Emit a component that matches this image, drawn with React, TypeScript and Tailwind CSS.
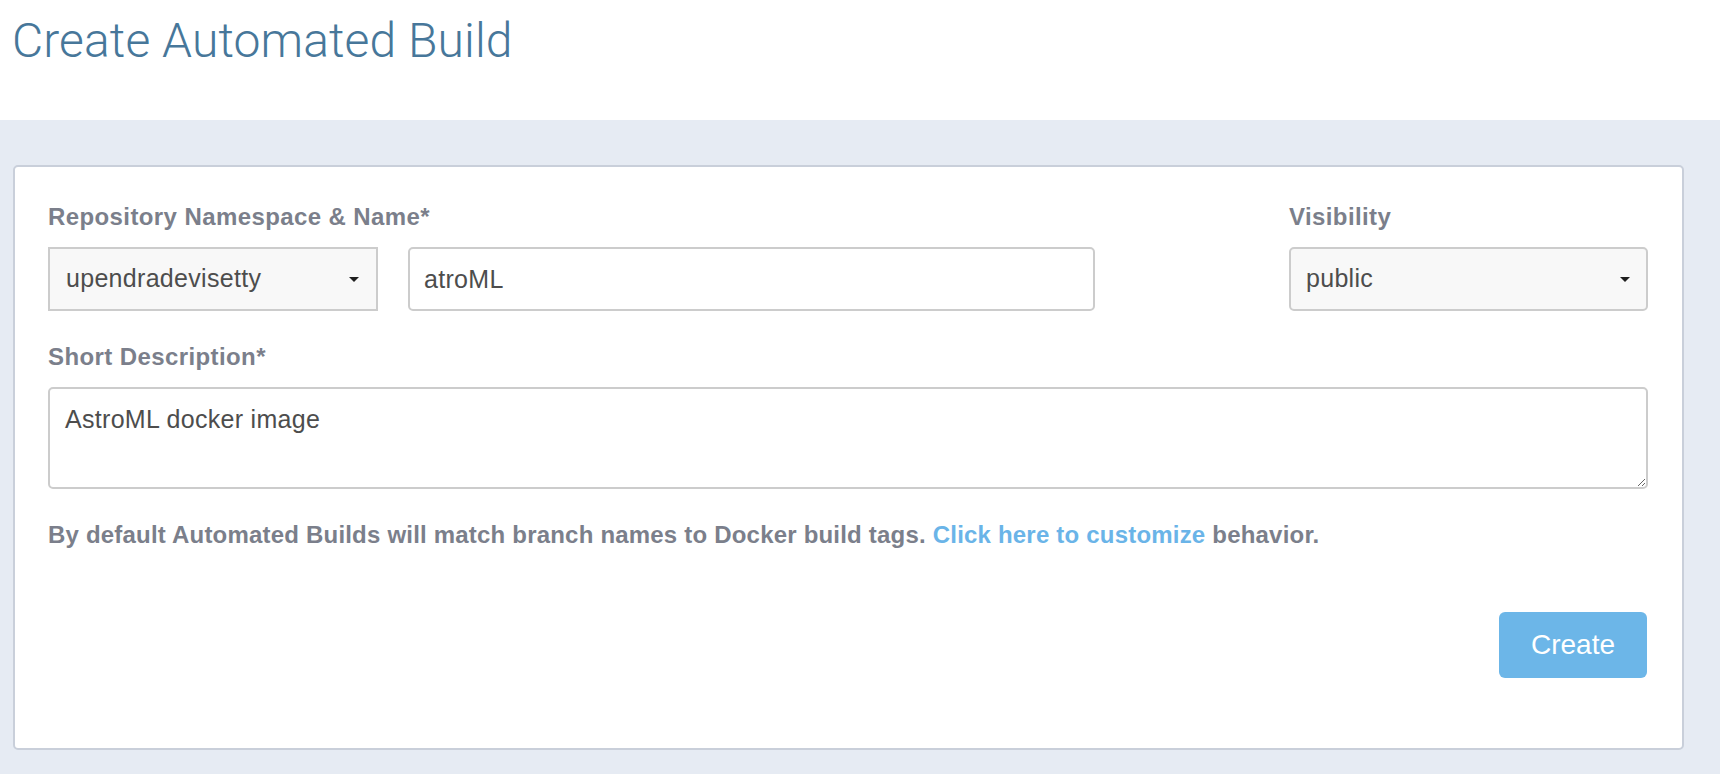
import React from 'react';

const sans = "font-['Liberation_Sans',Arial,sans-serif]";

function Caret() {
  return (
    <svg width="10" height="5" viewBox="0 0 10 5" className="shrink-0">
      <path d="M0 0 L10 0 L5 5 Z" fill="#1f1f1f" />
    </svg>
  );
}

export default function App() {
  return (
    <div className={`${sans} bg-[#e6ebf3] min-h-screen`}>
      {/* Page header */}
      <div className="bg-white h-[120px] pl-[12px] pt-[17px]">
        <h1 className="font-['Roboto',sans-serif] font-light text-[48px] leading-[48px] tracking-[0.1px] text-[#47779a]">
          Create Automated Build
        </h1>
      </div>

      {/* Form card */}
      <div className="pl-[13px] pr-[36px] pt-[45px] pb-[24px]">
        <div className="bg-white border-2 border-[#c9cfda] rounded-[5px] pt-[38px] pl-[33px] pr-[34px] pb-[70px]">
          <div className="flex justify-between">
            <div>
              <div className="text-[24px] leading-6 font-bold tracking-[0.4px] text-[#7b7f8b]">Repository Namespace &amp; Name*</div>
              <div className="flex gap-[30px] mt-[18px]">
                <div className="w-[330px] h-[64px] bg-[#f8f8f8] border-2 border-[#cccccc] flex items-center justify-between pl-[16px] pr-[17px]">
                  <span className="text-[25px] tracking-[0.3px] text-[#4d4d4d]">upendradevisetty</span>
                  <Caret />
                </div>
                <input
                  defaultValue="atroML"
                  className="w-[687px] h-[64px] border-2 border-[#cccccc] rounded-[5px] px-[14px] text-[25px] tracking-[0.3px] text-[#4d4d4d] outline-none"
                />
              </div>
            </div>
            <div className="w-[359px]">
              <div className="text-[24px] leading-6 font-bold tracking-[0.4px] text-[#7b7f8b]">Visibility</div>
              <div className="mt-[18px] h-[64px] bg-[#f8f8f8] border-2 border-[#cccccc] rounded-[5px] flex items-center justify-between pl-[15px] pr-[16px]">
                <span className="text-[25px] tracking-[0.3px] text-[#4d4d4d]">public</span>
                <Caret />
              </div>
            </div>
          </div>

          <div className="mt-[34px] text-[24px] leading-6 font-bold tracking-[0.4px] text-[#7b7f8b]">Short Description*</div>
          <textarea
            defaultValue="AstroML docker image"
            className="mt-[18px] block w-full h-[102px] border-2 border-[#cccccc] rounded-[5px] pt-[18px] px-[15px] text-[25px] leading-6 tracking-[0.3px] text-[#4d4d4d] outline-none"
          />

          <p className="mt-[34px] text-[24px] leading-6 font-bold tracking-[0.2px] text-[#7b7f8b]">
            By default Automated Builds will match branch names to Docker build tags.{' '}
            <a className="text-[#6ab4e8]">Click here to customize</a> behavior.
          </p>

          <div className="flex justify-end mt-[65px]">
            <button className="w-[148px] h-[66px] bg-[#6cb6e8] rounded-[6px] text-white text-[28px] mr-[1px]">
              Create
            </button>
          </div>
        </div>
      </div>
    </div>
  );
}
